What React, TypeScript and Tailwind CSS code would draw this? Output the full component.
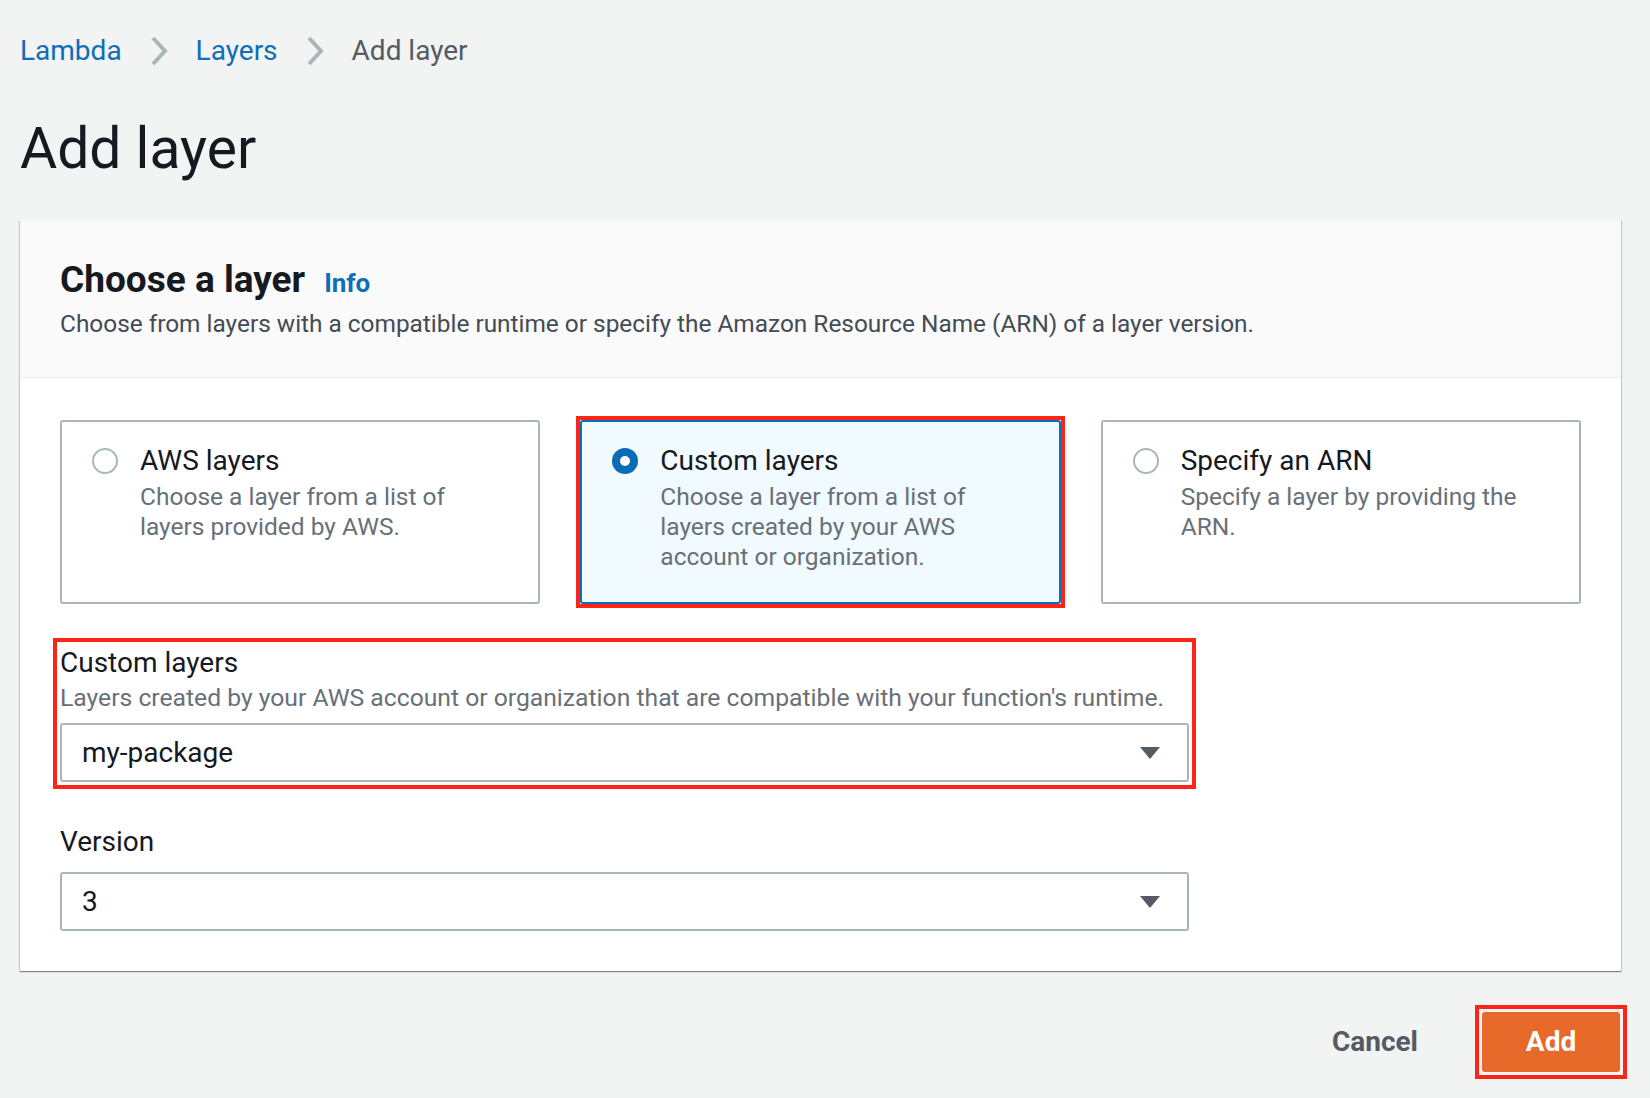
const Chevron = () => (
  <svg width="20" height="32" viewBox="0 0 20 32" fill="none">
    <path d="M4 3l12 13-12 13" stroke="#aab7b8" strokeWidth="4" />
  </svg>
);

const Caret = () => (
  <svg width="22" height="14" viewBox="0 0 22 14">
    <path d="M1 1h20L11 13z" fill="#545b64" />
  </svg>
);

type TileProps = {
  title: string;
  lines: string[];
  selected?: boolean;
};

const Tile = ({ title, lines, selected }: TileProps) => {
  return (
    <div className={selected ? "flex outline-4 outline-[#ff2418]" : "flex"}>
      <div
        className={
          selected
            ? "flex flex-1 gap-[22px] rounded-[3px] border-2 border-[#0073bb] bg-[#f1faff] px-[30px] pt-[20px] pb-[30px]"
            : "flex flex-1 gap-[22px] rounded-[3px] border-2 border-[#aab7b8] bg-white px-[30px] pt-[20px] pb-[30px]"
        }
      >
        <div className="flex h-[38px] items-center">
          {selected ? (
            <div className="flex h-[26px] w-[26px] items-center justify-center rounded-full bg-[#0b6bb5]">
              <div className="h-[10px] w-[10px] rounded-full bg-white" />
            </div>
          ) : (
            <div className="h-[26px] w-[26px] rounded-full border-2 border-[#aab7b8] bg-white" />
          )}
        </div>
        <div>
          <div className="text-[28px] leading-[38px] text-[#16191f]">{title}</div>
          <div className="mt-[2px] text-[24.5px] leading-[30px] whitespace-nowrap text-[#687078]">
            {lines.map((l) => (
              <div key={l}>{l}</div>
            ))}
          </div>
        </div>
      </div>
    </div>
  );
};

const Select = ({ value }: { value: string }) => (
  <div className="flex h-[59px] w-[1129px] items-center justify-between rounded-[3px] border-2 border-[#aab7b8] bg-white pr-[26px] pl-[20px]">
    <span className="text-[28px] text-[#16191f]">{value}</span>
    <Caret />
  </div>
);

export default function App() {
  return (
    <div className="min-h-screen bg-[#f2f3f3] pt-[32px] pr-[29px] pl-[20px] font-[Roboto,sans-serif]">
      <nav className="flex items-center gap-[27px] text-[28px] leading-[38px]">
        <span className="text-[#0e6eb8]">Lambda</span>
        <Chevron />
        <span className="text-[#0e6eb8]">Layers</span>
        <Chevron />
        <span className="text-[#545b64]">Add layer</span>
      </nav>

      <h1 className="mt-[45px] text-[57px] leading-[68px] text-[#16191f]">Add layer</h1>

      <div className="mt-[37px] bg-white shadow-[0_1px_1px_0_rgba(0,28,36,0.3),1px_1px_1px_0_rgba(0,28,36,0.15),-1px_1px_1px_0_rgba(0,28,36,0.15)]">
        <div className="border-b border-[#eaeded] bg-[#fafafa] px-[40px] pt-[38px] pb-[37px]">
          <div className="flex items-baseline gap-[19px]">
            <h2 className="text-[37px] leading-[44px] font-bold text-[#16191f]">Choose a layer</h2>
            <span className="text-[26px] font-bold text-[#0e6eb8]">Info</span>
          </div>
          <p className="mt-[5px] text-[24.4px] leading-[32px] text-[#444b55]">
            Choose from layers with a compatible runtime or specify the Amazon Resource Name (ARN) of a layer version.
          </p>
        </div>

        <div className="px-[40px] pt-[42px] pb-[40px]">
          <div className="grid grid-cols-3 gap-[40px]">
            <Tile title="AWS layers" lines={["Choose a layer from a list of", "layers provided by AWS."]} />
            <Tile
              selected
              title="Custom layers"
              lines={["Choose a layer from a list of", "layers created by your AWS", "account or organization."]}
            />
            <Tile title="Specify an ARN" lines={["Specify a layer by providing the", "ARN."]} />
          </div>

          <div className="mt-[41px] w-[1129px] outline-4 outline-offset-[3px] outline-[#ff2418]">
            <div className="text-[28px] leading-[36px] text-[#16191f]">Custom layers</div>
            <div className="mt-[2px] text-[24.7px] leading-[30px] whitespace-nowrap text-[#687078]">
              Layers created by your AWS account or organization that are compatible with your function's runtime.
            </div>
            <div className="mt-[10px]">
              <Select value="my-package" />
            </div>
          </div>

          <div className="mt-[42px]">
            <div className="text-[28px] leading-[36px] text-[#16191f]">Version</div>
            <div className="mt-[12px]">
              <Select value="3" />
            </div>
          </div>
        </div>
      </div>

      <div className="mt-[41px] flex items-center justify-end gap-[64px] pr-px">
        <span className="text-[28px] font-bold text-[#545b64]">Cancel</span>
        <div className="outline-4 outline-offset-[3px] outline-[#ff2418]">
          <button className="block h-[60px] w-[138px] rounded-[3px] bg-[#e7692a] text-[28px] font-bold text-white">
            Add
          </button>
        </div>
      </div>
    </div>
  );
}
